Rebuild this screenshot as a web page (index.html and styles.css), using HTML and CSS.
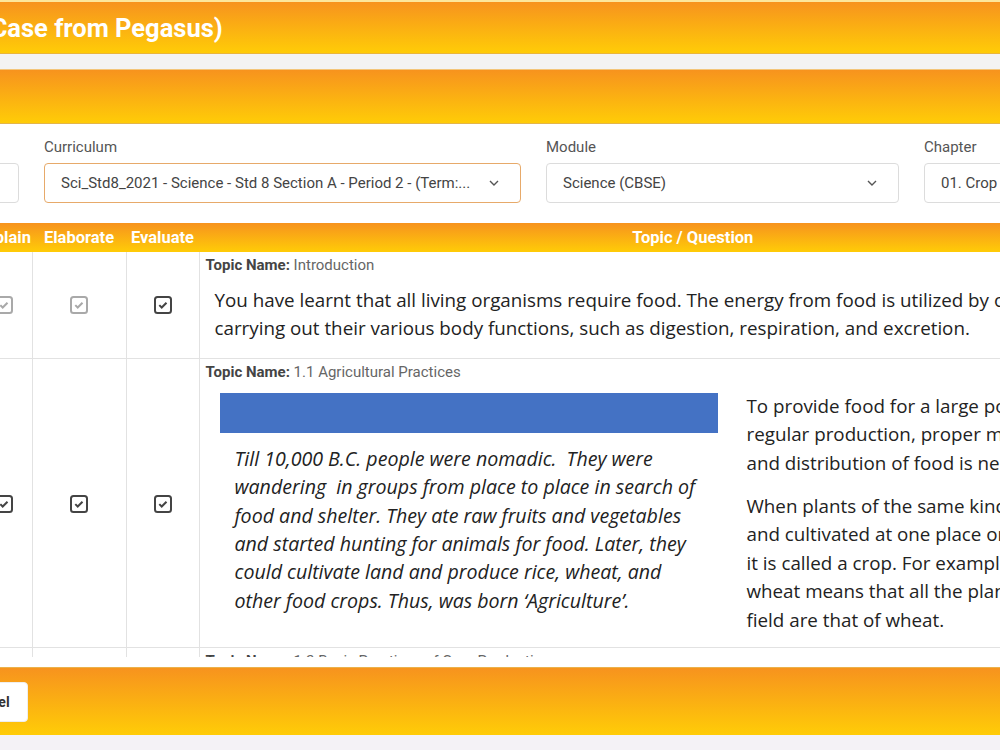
FILE: index.html
```html
<!DOCTYPE html>
<html>
<head>
    <meta charset="UTF-8">
    <title>Lesson Plan</title>
    <link rel="stylesheet" href="styles.css">
</head>
<body>
    <div class="modal">
        <!-- Cabecera del diálogo -->
        <div class="modal-title">Lesson Plan (Copy Case from Pegasus)</div>
        <div class="title-gap"></div>
        <div class="toolbar"></div>

        <!-- Filtros -->
        <div class="filters">
            <div class="field">
                <label>Academic Year</label>
                <div class="select"><span>2021 - 2022</span></div>
            </div>
            <div class="field">
                <label>Curriculum</label>
                <div class="select active">
                    <span>Sci_Std8_2021 - Science - Std 8 Section A - Period 2 - (Term:...</span>
                    <svg class="chevron" width="10" height="6" viewBox="0 0 10 6"><path d="M1 1l4 4 4-4" fill="none" stroke="#555" stroke-width="1.4"/></svg>
                </div>
            </div>
            <div class="field">
                <label>Module</label>
                <div class="select">
                    <span>Science (CBSE)</span>
                    <svg class="chevron" width="10" height="6" viewBox="0 0 10 6"><path d="M1 1l4 4 4-4" fill="none" stroke="#555" stroke-width="1.4"/></svg>
                </div>
            </div>
            <div class="field">
                <label>Chapter</label>
                <div class="select">
                    <span>01. Crop Production and Management</span>
                    <svg class="chevron" width="10" height="6" viewBox="0 0 10 6"><path d="M1 1l4 4 4-4" fill="none" stroke="#555" stroke-width="1.4"/></svg>
                </div>
            </div>
        </div>

        <!-- Tabla de temas -->
        <div class="table-wrap">
            <table class="plan-table">
                <colgroup>
                    <col class="c-engage">
                    <col class="c-explore">
                    <col class="c-explain">
                    <col class="c-elaborate">
                    <col class="c-evaluate">
                    <col>
                </colgroup>
                <thead>
                    <tr>
                        <th>Engage</th>
                        <th>Explore</th>
                        <th>Explain</th>
                        <th>Elaborate</th>
                        <th>Evaluate</th>
                        <th>Topic / Question</th>
                    </tr>
                </thead>
                <tbody>
                    <tr class="row-intro">
                        <td class="chk-cell"><svg class="chk off" width="18" height="18" viewBox="0 0 18 18"><rect x="1" y="1" width="16" height="16" rx="2.5" fill="none" stroke="currentColor" stroke-width="2"/><path d="M5.3 9.1l2.4 2.4 4.8-4.8" fill="none" stroke="currentColor" stroke-width="2"/></svg></td>
                        <td class="chk-cell"><svg class="chk off" width="18" height="18" viewBox="0 0 18 18"><rect x="1" y="1" width="16" height="16" rx="2.5" fill="none" stroke="currentColor" stroke-width="2"/><path d="M5.3 9.1l2.4 2.4 4.8-4.8" fill="none" stroke="currentColor" stroke-width="2"/></svg></td>
                        <td class="chk-cell"><svg class="chk off" width="18" height="18" viewBox="0 0 18 18"><rect x="1" y="1" width="16" height="16" rx="2.5" fill="none" stroke="currentColor" stroke-width="2"/><path d="M5.3 9.1l2.4 2.4 4.8-4.8" fill="none" stroke="currentColor" stroke-width="2"/></svg></td>
                        <td class="chk-cell"><svg class="chk off" width="18" height="18" viewBox="0 0 18 18"><rect x="1" y="1" width="16" height="16" rx="2.5" fill="none" stroke="currentColor" stroke-width="2"/><path d="M5.3 9.1l2.4 2.4 4.8-4.8" fill="none" stroke="currentColor" stroke-width="2"/></svg></td>
                        <td class="chk-cell"><svg class="chk on" width="18" height="18" viewBox="0 0 18 18"><rect x="1" y="1" width="16" height="16" rx="2.5" fill="none" stroke="currentColor" stroke-width="2"/><path d="M5.3 9.1l2.4 2.4 4.8-4.8" fill="none" stroke="currentColor" stroke-width="2"/></svg></td>
                        <td class="topic-cell">
                            <div class="topic-name"><b>Topic Name:</b> Introduction</div>
                            <p class="doc-text intro">You have learnt that all living organisms require food. The energy from food is utilized by organisms for<br>carrying out their various body functions, such as digestion, respiration, and excretion.</p>
                        </td>
                    </tr>
                    <tr class="row-practices">
                        <td class="chk-cell"><svg class="chk on" width="18" height="18" viewBox="0 0 18 18"><rect x="1" y="1" width="16" height="16" rx="2.5" fill="none" stroke="currentColor" stroke-width="2"/><path d="M5.3 9.1l2.4 2.4 4.8-4.8" fill="none" stroke="currentColor" stroke-width="2"/></svg></td>
                        <td class="chk-cell"><svg class="chk on" width="18" height="18" viewBox="0 0 18 18"><rect x="1" y="1" width="16" height="16" rx="2.5" fill="none" stroke="currentColor" stroke-width="2"/><path d="M5.3 9.1l2.4 2.4 4.8-4.8" fill="none" stroke="currentColor" stroke-width="2"/></svg></td>
                        <td class="chk-cell"><svg class="chk on" width="18" height="18" viewBox="0 0 18 18"><rect x="1" y="1" width="16" height="16" rx="2.5" fill="none" stroke="currentColor" stroke-width="2"/><path d="M5.3 9.1l2.4 2.4 4.8-4.8" fill="none" stroke="currentColor" stroke-width="2"/></svg></td>
                        <td class="chk-cell"><svg class="chk on" width="18" height="18" viewBox="0 0 18 18"><rect x="1" y="1" width="16" height="16" rx="2.5" fill="none" stroke="currentColor" stroke-width="2"/><path d="M5.3 9.1l2.4 2.4 4.8-4.8" fill="none" stroke="currentColor" stroke-width="2"/></svg></td>
                        <td class="chk-cell"><svg class="chk on" width="18" height="18" viewBox="0 0 18 18"><rect x="1" y="1" width="16" height="16" rx="2.5" fill="none" stroke="currentColor" stroke-width="2"/><path d="M5.3 9.1l2.4 2.4 4.8-4.8" fill="none" stroke="currentColor" stroke-width="2"/></svg></td>
                        <td class="topic-cell">
                            <div class="topic-name"><b>Topic Name:</b> 1.1 Agricultural Practices</div>
                            <div class="two-col">
                                <div class="box-left">
                                    <div class="box-bar"></div>
                                    <p class="doc-text italic">Till 10,000 B.C. people were nomadic.&nbsp; They were<br>wandering&nbsp; in groups from place to place in search of<br>food and shelter. They ate raw fruits and vegetables<br>and started hunting for animals for food. Later, they<br>could cultivate land and produce rice, wheat, and<br>other food crops. Thus, was born ‘Agriculture’.</p>
                                </div>
                                <div class="box-right">
                                    <p class="doc-text">To provide food for a large population,<br>regular production, proper management<br>and distribution of food is necessary.</p>
                                    <p class="doc-text">When plants of the same kind are grown<br>and cultivated at one place on a large scale,<br>it is called a crop. For example, crop of<br>wheat means that all the plants grown in a<br>field are that of wheat.</p>
                                </div>
                            </div>
                        </td>
                    </tr>
                    <tr>
                        <td class="chk-cell"></td>
                        <td class="chk-cell"></td>
                        <td class="chk-cell"></td>
                        <td class="chk-cell"></td>
                        <td class="chk-cell"></td>
                        <td class="topic-cell">
                            <div class="topic-name"><b>Topic Name:</b> 1.2 Basic Practices of Crop Production</div>
                        </td>
                    </tr>
                </tbody>
            </table>
        </div>

        <!-- Pie con botones -->
        <div class="modal-footer">
            <button class="btn">Save</button>
            <button class="btn">Cancel</button>
        </div>
    </div>
</body>
</html>
```

FILE: styles.css
```css
html, body {
    margin: 0;
    padding: 0;
    overflow: hidden;
}

body {
    font-family: Roboto, "Liberation Sans", sans-serif;
    background-color: #f4f2f6;
    height: 750px;
}

.modal {
    width: 1487px;
    margin-left: -300px;
    background-color: #fff;
    border-top: 2px solid #fde79b;
}

.modal-title {
    height: 51px;
    line-height: 53px;
    padding-left: 71px;
    background: linear-gradient(#f7931e, #ffcc07);
    border-bottom: 1px solid #e9b53c;
    color: #fff;
    font-size: 25.5px;
    font-weight: 700;
    white-space: nowrap;
}

.title-gap {
    height: 15px;
    background-color: #f3f3f3;
    border-bottom: 1px solid #f3c57a;
}

.toolbar {
    height: 53px;
    background: linear-gradient(#f7931e, #ffcc07);
    border-bottom: 1px solid #e3b54a;
}

/* filtros */
.filters {
    display: grid;
    grid-template-columns: 299px 477px 353px 1fr;
    gap: 25px;
    padding: 14px 0 20px 20px;
}

.field label {
    display: block;
    height: 18px;
    line-height: 18px;
    margin-bottom: 7px;
    font-size: 15px;
    color: #555;
}

.select {
    display: flex;
    align-items: center;
    height: 38px;
    padding: 0 21px 0 16px;
    border: 1px solid #dcdcdc;
    border-radius: 4px;
    font-size: 15px;
    color: #444;
    white-space: nowrap;
    overflow: hidden;
}

.select span {
    flex: 1;
    overflow: hidden;
}

.select.active {
    border-color: #e7aa6a;
}

.chevron {
    flex: none;
    margin-left: 8px;
}

/* tabla */
.table-wrap {
    height: 434px;
    overflow: hidden;
}

.plan-table {
    width: 100%;
    table-layout: fixed;
    border-collapse: collapse;
}

.c-engage, .c-explore { width: 138px; }
.c-explain { width: 56px; }
.c-elaborate { width: 94px; }
.c-evaluate { width: 73px; }

.plan-table th {
    height: 29px;
    padding: 0;
    background: linear-gradient(#f7931e, #ffcc07);
    color: #fff;
    font-size: 16.5px;
    font-weight: 700;
    text-align: center;
    white-space: nowrap;
}

.plan-table td {
    border-right: 1px solid #e2e2e2;
    border-bottom: 1px solid #e2e2e2;
    padding: 0;
    vertical-align: top;
}

.chk-cell {
    text-align: center;
    vertical-align: middle !important;
}

.chk {
    display: inline-block;
    vertical-align: middle;
}

.chk.off { color: #a9a9a9; }
.chk.on { color: #444; }

.row-intro .chk {
    margin-bottom: 1px;
}

.topic-cell {
    padding: 5px 0 0 6px !important;
    overflow: hidden;
}

.topic-name {
    font-size: 15px;
    line-height: 16px;
    color: #666;
    white-space: nowrap;
}

.topic-name b {
    color: #444;
}

.doc-text {
    font-family: "Open Sans", "Noto Sans", sans-serif;
    font-size: 18.8px;
    line-height: 28.4px;
    color: #222;
    margin: 0;
    white-space: nowrap;
}

.doc-text.intro {
    margin: 13px 0 15px 9px;
}

.two-col {
    display: flex;
    gap: 29px;
    margin: 12px 0 13px 14px;
}

.box-left {
    width: 498px;
    flex: none;
}

.box-bar {
    height: 40px;
    margin-top: 1px;
    background-color: #4472c4;
}

.doc-text.italic {
    font-style: italic;
    font-size: 19.6px;
    margin: 12px 0 0 15px;
}

.box-right .doc-text + .doc-text {
    margin-top: 15px;
}

/* pie */
.modal-footer {
    display: flex;
    gap: 10px;
    margin-top: 10px;
    padding: 14px 0 13px 172px;
    background: linear-gradient(#f7931e, #ffcc07);
    border-top: 1px solid #eab24c;
}

.btn {
    height: 40px;
    padding: 0 17px;
    background-color: #fff;
    border: 1px solid #eee;
    border-radius: 4px;
    font-family: Roboto, "Liberation Sans", sans-serif;
    font-size: 14px;
    font-weight: 700;
    color: #333;
}
```
